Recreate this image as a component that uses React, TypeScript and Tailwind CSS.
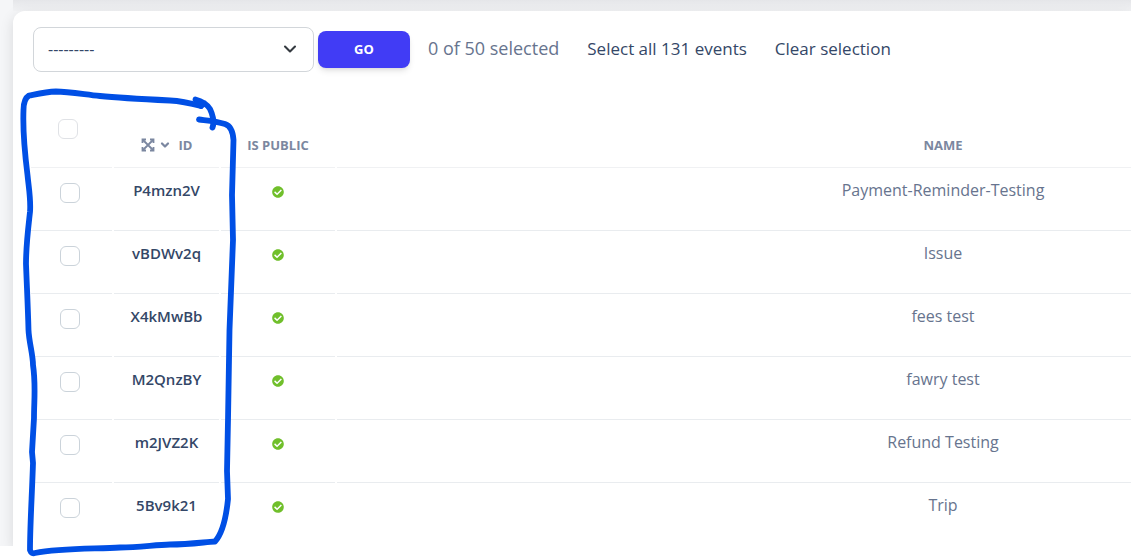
import { ChevronDown } from "lucide-react";
import { FaCheckCircle } from "react-icons/fa";

const events = [
  { id: "P4mzn2V", name: "Payment-Reminder-Testing" },
  { id: "vBDWv2q", name: "Issue" },
  { id: "X4kMwBb", name: "fees test" },
  { id: "M2QnzBY", name: "fawry test" },
  { id: "m2JVZ2K", name: "Refund Testing" },
  { id: "5Bv9k21", name: "Trip" },
];

const checkboxClass =
  "block size-5 appearance-none rounded-md border bg-white checked:border-[#413cf5] checked:bg-[#413cf5]";

function Toolbar() {
  return (
    <form className="flex items-center px-5 pt-4" onSubmit={(e) => e.preventDefault()}>
      <div className="relative w-[281px] shrink-0">
        <select
          aria-label="Action"
          className="h-[45px] w-full appearance-none rounded-lg border border-[#d2d6da] bg-white px-3.5 pb-0.5 text-base text-[#344767]"
        >
          <option>---------</option>
        </select>
        <ChevronDown
          className="pointer-events-none absolute top-3 right-3.5 size-5 text-[#343a40]"
          strokeWidth={2.5}
        />
      </div>
      <button
        type="submit"
        className="ml-1 h-[37px] w-[92px] shrink-0 rounded-lg bg-[#413cf5] text-[13px] font-bold text-white shadow-md"
      >
        GO
      </button>
      <div className="ml-[18px] flex items-baseline gap-7 pb-1 text-[17px] whitespace-nowrap">
        <span className="text-lg">0 of 50 selected</span>
        <a href="#all" className="text-[#344767]">
          Select all 131 events
        </a>
        <a href="#clear" className="text-[#344767]">
          Clear selection
        </a>
      </div>
    </form>
  );
}

function SortIcons() {
  return (
    <span className="flex items-center gap-1">
      <svg viewBox="0 0 14 14" className="size-3.5" fill="none" stroke="currentColor" strokeWidth="1.8">
        <path d="M2 2l10 10M12 2L2 12" />
        <path d="M1.500 5V1.500H5M9 1.500h3.500V5M12.500 9v3.500H9M5 12.500H1.500V9" />
      </svg>
      <ChevronDown className="size-3" strokeWidth={4.5} />
    </span>
  );
}

function EventTable() {
  return (
    <table className="w-[1522px] table-fixed border-separate border-spacing-x-0.5 border-spacing-y-0 text-center">
      <colgroup>
        <col className="w-[81px]" />
        <col className="w-[105px]" />
        <col className="w-[114px]" />
        <col />
      </colgroup>
      <thead>
        <tr className="h-24 text-[13px] leading-5 font-bold text-[#7b87a0] [&>th]:border-b [&>th]:border-[#f0f1f3] [&>th]:align-bottom">
          <th className="pb-7 pl-[27px]">
            <input type="checkbox" aria-label="Select all" className={`${checkboxClass} border-[#e0e2e6]`} />
          </th>
          <th className="pb-3">
            <span className="flex items-center justify-center gap-2">
              <SortIcons />
              ID
            </span>
          </th>
          <th className="pb-3">IS PUBLIC</th>
          <th className="pb-3">NAME</th>
        </tr>
      </thead>
      <tbody>
        {events.map((event) => (
          <tr
            key={event.id}
            className="h-[63px] text-base leading-6 [&>*]:border-b [&>*]:border-[#e9ecef] [&>*]:align-top last:[&>*]:border-transparent"
          >
            <td className="pt-[15px] pl-[29px]">
              <input type="checkbox" aria-label={`Select ${event.id}`} className={`${checkboxClass} border-[#cbd3da]`} />
            </td>
            <th className="pt-2.5 text-[15px] leading-6 font-semibold">
              <a href={`#${event.id}`} className="text-[#344767]">
                {event.id}
              </a>
            </th>
            <td className="pt-[18px]">
              <FaCheckCircle className="mx-auto size-3 text-[#70bf2b]" aria-label="Yes" />
            </td>
            <td className="pt-2.5">{event.name}</td>
          </tr>
        ))}
      </tbody>
    </table>
  );
}

function InkOutline() {
  return (
    <svg
      className="pointer-events-none absolute top-0 left-0"
      width="250"
      height="560"
      viewBox="0 0 250 560"
      fill="none"
      stroke="#004fe5"
      strokeWidth="5.8"
      strokeLinecap="round"
      strokeLinejoin="round"
      aria-hidden="true"
    >
      <path d="M201 106C190 103 181 101 170 100.500C140 99 120 98 100 96C82 94 68 91.500 56 91.500C46 92 37 94 29 95.500C25 98 23.500 103 23.500 110C22.500 135 25 155 27.500 175C29 190 31 200 30 212C28 230 26 245 26 264C27 290 28 310 28.500 330C29 342 33 355 33 365C36 385 34 400 34 418L32 452L33 463C32 495 30 525 30 550C31 553 33 554 35 553C60 548 95 549 120 547.500C140 547 155 545 170 544.500C190 544.500 205 542 215 541.500C221 535 226 519 228 499L227 471L228 420L229.500 330L233 240L232 195L233.500 140C233 132 231 126 225 124C216 121 207 120.500 199 119.500" />
      <path d="M195.500 99.500C202 101 208 105 210 109C212 113 215 122 212.500 127.500M197 101L204 103L201 106" />
    </svg>
  );
}

export default function App() {
  return (
    <div className="relative overflow-hidden bg-white font-['Open_Sans',sans-serif] text-[#67748e]">
      <div className="bg-[#f5f6f8] pl-[13px]">
        <div className="h-[11px] bg-linear-to-b from-[#e5e6e9] to-[#f2f3f5]" />
        <main className="rounded-tl-xl bg-white shadow-[0_4px_14px_rgba(0,0,0,0.12)]">
          <Toolbar />
          <div className="overflow-hidden pl-4">
            <EventTable />
          </div>
        </main>
      </div>
      <div className="relative h-[15px] bg-white" />
      <InkOutline />
    </div>
  );
}
